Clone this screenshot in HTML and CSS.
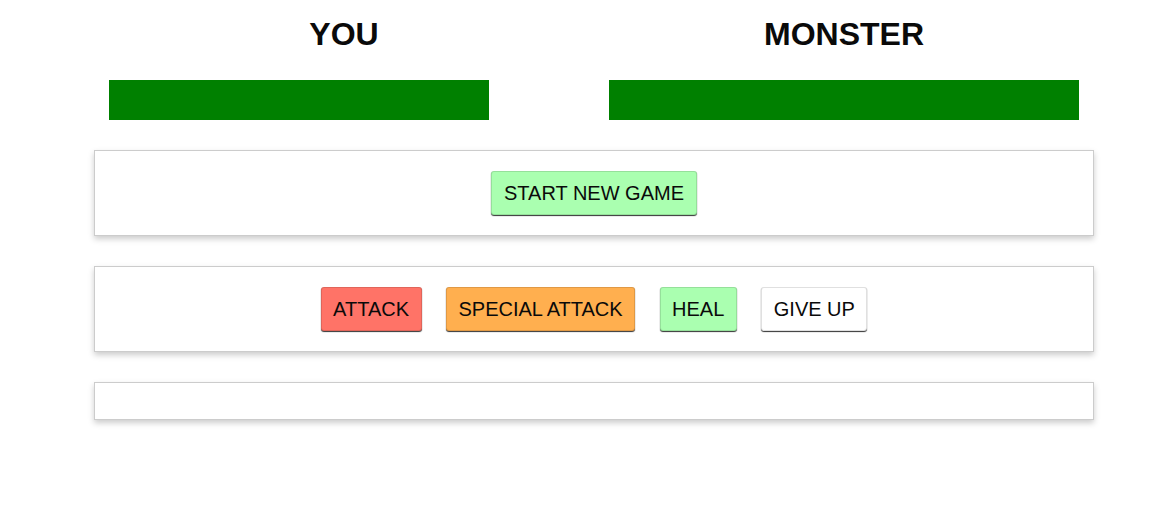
FILE: index.html
```html
<!DOCTYPE html>
<html>
<head>
<meta charset="utf-8">
<link rel="stylesheet" href="styles.css">
</head>
<body>
<div class="app">
  <section class="players">
    <div class="col">
      <h1 class="title">YOU</h1>
      <div class="healthbar hb-you"></div>
    </div>
    <div class="col">
      <h1 class="title">MONSTER</h1>
      <div class="healthbar hb-monster"></div>
    </div>
  </section>
  <section class="panel controls">
    <button class="btn btn-start">START NEW GAME</button>
  </section>
  <section class="panel controls">
    <button class="btn btn-attack">ATTACK</button>
    <button class="btn btn-special">SPECIAL ATTACK</button>
    <button class="btn btn-heal">HEAL</button>
    <button class="btn btn-giveup">GIVE UP</button>
  </section>
  <section class="panel log">
    <ul class="log-list"></ul>
  </section>
</div>
</body>
</html>
```

FILE: styles.css
```css
html, body {
  margin: 0;
  padding: 0;
  background: #ffffff;
}
body {
  font-family: "Liberation Sans", Arial, sans-serif;
  color: #0a0a0a;
  font-size: 16px;
}
.app {
  width: 1000px;
  margin-left: 94px;
  padding-bottom: 40px;
}
.players {
  display: flex;
}
.col {
  width: 500px;
  box-sizing: border-box;
  padding: 0 15px;
}
.title {
  margin: 16px 0 0;
  text-align: center;
  font-size: 32px;
  line-height: 37px;
  font-weight: bold;
  color: #0a0a0a;
}
.healthbar {
  height: 40px;
  margin-top: 27px;
  background-color: #008000;
}
.hb-you { width: 380px; }
.hb-monster { width: 470px; }
.panel {
  box-sizing: border-box;
  width: 1000px;
  margin-top: 30px;
  padding: 10px;
  text-align: center;
  background: #ffffff;
  border: 1px solid #cccccc;
  box-shadow: 0 3px 6px #cccccc;
}
.btn {
  box-sizing: border-box;
  font-family: "Liberation Sans", Arial, sans-serif;
  font-size: 20px;
  line-height: 20px;
  height: 44px;
  padding: 11px 11.5px;
  margin: 10px;
  border: 1px solid rgba(0, 0, 0, 0.12);
  border-radius: 3px;
  color: #0a0a0a;
  background-color: #eeeeee;
  box-shadow: 0 1px 1px rgba(0, 0, 0, 0.8);
  vertical-align: top;
  cursor: pointer;
}
.btn-start { background-color: #aaffb0; }
.btn-attack { background-color: #ff7367; }
.btn-special { background-color: #ffaf4f; }
.btn-heal { background-color: #aaffb0; }
.btn-giveup { background-color: #ffffff; }
.log-list {
  list-style: none;
  margin: 0 0 16px;
  padding: 0;
}
```
